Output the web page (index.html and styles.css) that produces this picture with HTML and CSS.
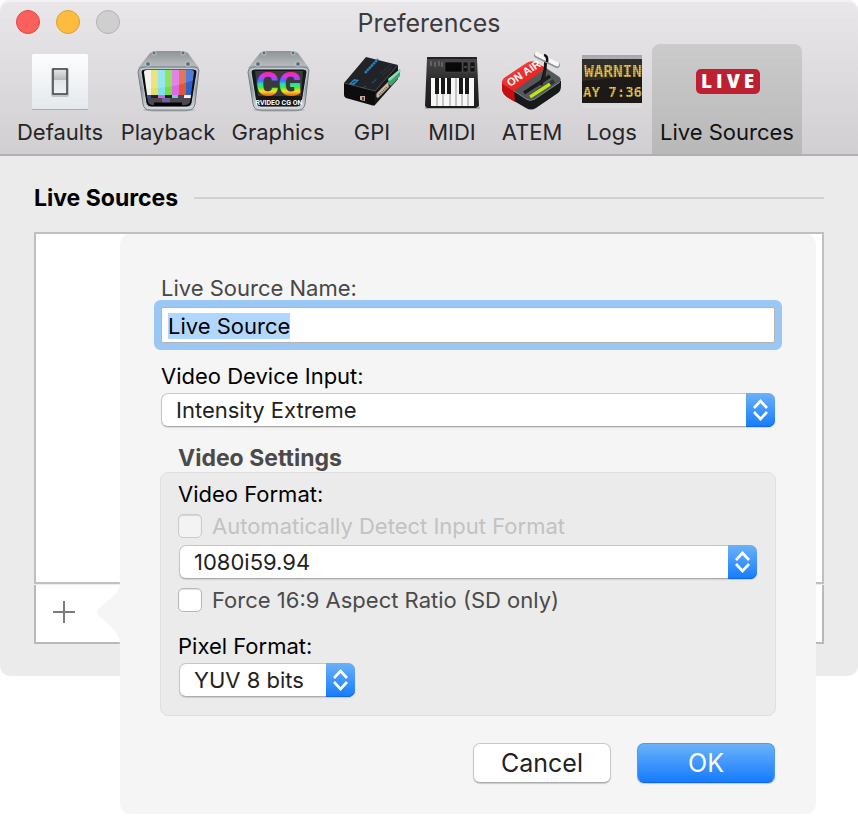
FILE: index.html
```html
<!DOCTYPE html>
<html lang="en">
<head>
    <meta charset="UTF-8">
    <meta name="viewport" content="width=device-width, initial-scale=1.0">
    <title>Preferences</title>
    <link rel="stylesheet" href="styles.css">
</head>
<body>
<div class="window">
    <header class="top">
        <div class="titlebar">
            <div class="lights">
                <button class="light close" aria-label="Close"></button>
                <button class="light minimize" aria-label="Minimize"></button>
                <button class="light zoom" aria-label="Zoom" disabled></button>
            </div>
            <h1>Preferences</h1>
        </div>

        <nav class="toolbar">
            <button class="tool">
                <svg viewBox="0 0 64 64">
                    <defs>
                        <linearGradient id="plate" x1="0" y1="0" x2="0" y2="1"><stop offset="0" stop-color="#fdfeff"/><stop offset="1" stop-color="#e4e9ed"/></linearGradient>
                        <linearGradient id="rocker" x1="0" y1="0" x2="0" y2="1"><stop offset="0" stop-color="#e8e8ea"/><stop offset=".42" stop-color="#b9babc"/><stop offset=".46" stop-color="#e2e6e8"/><stop offset="1" stop-color="#eff3f5"/></linearGradient>
                    </defs>
                    <rect x="4" y="6" width="56" height="56" rx="1" fill="#a9adb1"/>
                    <rect x="4" y="6" width="56" height="55" rx="1" fill="url(#plate)"/>
                    <rect x="23" y="20" width="18" height="29" rx="2" fill="#c3c7ca"/>
                    <rect x="25" y="21" width="14" height="25" fill="url(#rocker)" stroke="#47494c" stroke-width="1.6"/>
                </svg>
                <span>Defaults</span>
            </button>

            <button class="tool">
                <svg viewBox="0 0 64 64">
                    <defs>
                        <linearGradient id="steel" x1="0" y1="0" x2="0" y2="1"><stop offset="0" stop-color="#909396"/><stop offset=".6" stop-color="#b4b8bb"/><stop offset="1" stop-color="#92989d"/></linearGradient>
                        <linearGradient id="bezel" x1="0" y1="0" x2="0" y2="1"><stop offset="0" stop-color="#b5bfc6"/><stop offset=".5" stop-color="#8d9aa3"/><stop offset="1" stop-color="#d4dade"/></linearGradient>
                        <clipPath id="tube"><path d="M8 24 Q8 22 11 22 H55 Q58 22 58 24 L54 54 Q53 57 49 57 H17 Q13 57 12 54 Z"/></clipPath>
                    </defs>
                    <ellipse cx="33" cy="62" rx="26" ry="1.6" fill="#aaa"/>
                    <path d="M18 3 H48 L52 5 L63 20 L33 26 L2 20 L14 5 Z" fill="url(#steel)"/>
                    <path d="M3 21 Q4 19 8 19 H58 Q62 19 63 22 L59 56 Q58 62 52 62 H14 Q8 62 7 56 L2 24 Z" fill="url(#bezel)" stroke="#747e85"/>
                    <path d="M5 24 Q5 21 9 21 H57 Q61 21 61 24 L56 55 Q55 59 51 59 H15 Q11 59 10 55 Z" fill="#08090a" stroke="#dfe5e9" stroke-width=".8"/>
                    <g clip-path="url(#tube)">
                        <path d="M8 22 H16 V50 H8 Z" fill="#f0f0eb"/><path d="M15 22 H22 V50 H15 Z" fill="#e8dc63"/>
                        <path d="M22 22 H30 V50 H22 Z" fill="#7ee2ea"/><path d="M29 22 H37 V50 H29 Z" fill="#76dc42"/>
                        <path d="M36 22 H43 V50 H36 Z" fill="#dc68e3"/><path d="M43 22 H51 V50 H43 Z" fill="#df5733"/>
                        <path d="M50 22 H59 V50 H50 Z" fill="#2c61cf"/>
                        <path d="M10 47 H56 V58 H10 Z" fill="#4b4851"/>
                        <path d="M10 47 H15 V50 H10 Z" fill="#2c50a8"/><path d="M15 47 H22 V50 H15 Z" fill="#202126"/><path d="M22 47 H29 V50 H22 Z" fill="#cb6bd3"/><path d="M29 47 H36 V50 H29 Z" fill="#202126"/><path d="M36 47 H42 V50 H36 Z" fill="#79c4cd"/><path d="M48 47 H56 V50 H48 Z" fill="#f4f4f4"/>
                        <path d="M26 50 H34 V56 H26 Z" fill="#6d629b"/>
                        <path d="M8 22 H58 V32 Q32 42 8 40 Z" fill="#fff" opacity=".18"/>
                    </g>
                    <path d="M18 56 H46" stroke="#020303" stroke-width="3"/>
                    <g fill="#5b707c" stroke="#d9dfe2" stroke-width=".7"><circle cx="18" cy="5" r="2"/><circle cx="47" cy="5" r="2"/><circle cx="12" cy="16" r="2.4"/><circle cx="52" cy="16" r="2.4"/></g>
                </svg>
                <span>Playback</span>
            </button>

            <button class="tool">
                <svg viewBox="0 0 64 64">
                    <defs>
                        <linearGradient id="rainbow" x1="0" y1="23" x2="0" y2="49" gradientUnits="userSpaceOnUse"><stop offset="0" stop-color="#f2306e"/><stop offset=".2" stop-color="#e52bf1"/><stop offset=".38" stop-color="#3a7cf5"/><stop offset=".5" stop-color="#20dec2"/><stop offset=".64" stop-color="#5ae82d"/><stop offset=".78" stop-color="#f4e21a"/><stop offset="1" stop-color="#f2371e"/></linearGradient>
                    </defs>
                    <ellipse cx="33" cy="62" rx="26" ry="1.6" fill="#aaa"/>
                    <path d="M18 3 H48 L52 5 L63 20 L33 26 L2 20 L14 5 Z" fill="url(#steel)"/>
                    <path d="M3 21 Q4 19 8 19 H58 Q62 19 63 22 L59 56 Q58 62 52 62 H14 Q8 62 7 56 L2 24 Z" fill="url(#bezel)" stroke="#747e85"/>
                    <path d="M5 24 Q5 21 9 21 H57 Q61 21 61 24 L56 55 Q55 59 51 59 H15 Q11 59 10 55 Z" fill="#161718" stroke="#dfe5e9" stroke-width=".8"/>
                    <path d="M9 23 H57 L55 48 H12 Z" fill="#393a3c"/>
                    <text class="cg-big" x="33" y="48" fill="url(#rainbow)">CG</text>
                    <text class="cg-small" x="33" y="57">RVIDEO CG ON</text>
                    <g fill="#5b707c" stroke="#d9dfe2" stroke-width=".7"><circle cx="18" cy="5" r="2"/><circle cx="47" cy="5" r="2"/><circle cx="12" cy="16" r="2.4"/><circle cx="52" cy="16" r="2.4"/></g>
                </svg>
                <span>Graphics</span>
            </button>

            <button class="tool">
                <svg viewBox="0 0 64 64">
                    <path d="M26 9 L58 17 L35 43 L4 35 Z" fill="#222326"/>
                    <path d="M4 35 L35 43 V57 Q34 58 31 57 L6 50 Q4 49 4 47 Z" fill="#0d0d0e"/>
                    <path d="M35 43 L58 17 V31 L35 57 Z" fill="#171719"/>
                    <path d="M4 35 L35 43 L58 17" fill="none" stroke="#48494c" stroke-width=".7"/>
                    <path d="M48 31 L60 21 V28 L51 38 L48 36 Z" fill="#3da270"/>
                    <path d="M48 31 L60 21 L61 23 L50 33 Z" fill="#8fdab0"/>
                    <path d="M37 45 L48 34 L49 39 L38 50 Q35 49 37 45 Z" fill="#c8bda1" stroke="#756c59" stroke-width=".7"/>
                    <path d="M39 47 L47 39" stroke="#605743" stroke-width="1.5" stroke-dasharray="1 1"/>
                    <path d="M20 48 H25 V53 L20 52 Z" fill="#c9ae97"/><path d="M22 49 H24 V52 H22 Z" fill="#5b4639"/>
                    <path d="M9 36 L14 37 L19 32 L14 31 Z" fill="#2585c9"/><path d="M12 35 L16 33" stroke="#102c45"/>
                    <path d="M25 25 L38 11" stroke="#2585c9" stroke-width="2.4" stroke-dasharray="2.5 .5"/>
                    <path d="M23 40 L26 38 M32 35 L37 31" stroke="#2167a1" stroke-width="1.5" stroke-dasharray="1 1"/>
                    <path d="M41 25 L51 16 M43 27 L51 20" stroke="#3d4b63" stroke-dasharray="1 1"/>
                </svg>
                <span>GPI</span>
            </button>

            <button class="tool">
                <svg viewBox="0 0 64 64">
                    <defs><linearGradient id="synth" x1="0" y1="0" x2="0" y2="1"><stop offset="0" stop-color="#4a4a4b"/><stop offset=".5" stop-color="#29292a"/><stop offset="1" stop-color="#1c1c1d"/></linearGradient></defs>
                    <path d="M5 60 H60" stroke="#aaa" stroke-width="2"/>
                    <path d="M7 10 Q7 9 8 9 H56 Q57 9 57 10 L59 58 L56 60 H7 L5 58 Z" fill="url(#synth)"/>
                    <path d="M7 10 H57" stroke="#161616" stroke-width="1.5"/>
                    <rect x="25" y="14" width="17" height="10" rx="1" fill="#080808" stroke="#555" stroke-width=".5"/>
                    <rect x="43" y="14" width="5" height="10" fill="#111" stroke="#666" stroke-width=".5"/><rect x="50" y="14" width="5" height="10" fill="#111" stroke="#666" stroke-width=".5"/>
                    <path d="M11 13 V18 M15 14 V19 M19 13 V18 M22 14 V19 M44 19 H47 M51 19 H54" stroke="#777" stroke-width="1.2"/>
                    <rect x="11" y="30" width="43" height="28" fill="#f7f7f7"/>
                    <path d="M17 30 V58 M23 30 V58 M30 30 V58 M36 30 V58 M42 30 V58 M48 30 V58" stroke="#777" stroke-width=".8"/>
                    <path d="M15 30 H19 V46 H15 Z M21 30 H25 V46 H21 Z M27 30 H31 V46 H27 Z M39 30 H43 V46 H39 Z M45 30 H49 V46 H45 Z" fill="#171719"/>
                </svg>
                <span>MIDI</span>
            </button>

            <button class="tool">
                <svg viewBox="0 0 64 64">
                    <defs><linearGradient id="air" x1="0" y1="0" x2="1" y2="1"><stop offset="0" stop-color="#ff4a42"/><stop offset="1" stop-color="#d90e12"/></linearGradient></defs>
                    <path d="M2 33 V42 Q3 46 7 49 L26 60 Q31 63 36 60 L58 45 Q61 43 61 38 V33 Z" fill="#17191b"/>
                    <path d="M2 34 V42 Q3 46 7 49 L15 54 L14 42 Z" fill="#c80d11"/>
                    <path d="M4 30 L25 16 Q30 12 35 14 L46 20 L15 44 L4 37 Q0 34 4 30 Z" fill="url(#air)"/>
                    <path d="M46 20 L58 28 Q63 31 59 35 L35 51 Q30 54 26 51 L14 43 Z" fill="#55585b"/>
                    <path d="M14 43 L26 51 Q30 54 35 51 L60 34" fill="none" stroke="#909396" stroke-width=".8"/>
                    <path d="M24 45 L50 28" stroke="#191a1b" stroke-width="3.4"/>
                    <path d="M30 49 L54 33" stroke="#303330" stroke-width="4"/>
                    <path d="M30 49 L50 36" stroke="#bce519" stroke-width="3.4"/>
                    <path d="M41 37 L45 22 L46 9" fill="none" stroke="#111214" stroke-width="3"/>
                    <path d="M36 38 L44 32 L45 22" fill="none" stroke="#1d1f21" stroke-width="2.4"/>
                    <path d="M37 7 L57 17" stroke="#929292" stroke-width="6" stroke-linecap="round"/>
                    <path d="M37 6 L57 16" stroke="#f7f7f7" stroke-width="4.6" stroke-linecap="round"/>
                    <path d="M44 7 Q48 8 47 14" fill="none" stroke="#111" stroke-width="2.5"/>
                    <text class="on-air" transform="translate(10 39) rotate(-34)">ON AIR</text>
                </svg>
                <span>ATEM</span>
            </button>

            <button class="tool">
                <svg viewBox="0 0 64 64">
                    <defs>
                        <linearGradient id="rail" x1="0" y1="0" x2="0" y2="1"><stop offset="0" stop-color="#a8a8aa"/><stop offset="1" stop-color="#dedee0"/></linearGradient>
                        <pattern id="dots" width="2" height="2" patternUnits="userSpaceOnUse"><path d="M0 0 H2 M0 0 V2" stroke="#17140e" stroke-width=".4"/></pattern>
                    </defs>
                    <rect x="2" y="7" width="60" height="53" fill="url(#rail)"/>
                    <rect x="2" y="11" width="60" height="44" fill="#1c1b19"/>
                    <path d="M2 33 Q35 31 62 24 V11 H2 Z" fill="#343331"/>
                    <text class="led" x="4" y="29">WARNIN</text>
                    <text class="led time" x="3" y="49">AY 7:36</text>
                    <rect x="2" y="11" width="60" height="44" fill="url(#dots)"/>
                </svg>
                <span>Logs</span>
            </button>

            <button class="tool selected">
                <svg viewBox="0 0 64 64">
                    <rect x="1" y="21" width="64" height="25" rx="5" fill="#bd2031"/>
                    <text class="live" x="6" y="40">LIVE</text>
                </svg>
                <span>Live Sources</span>
            </button>
        </nav>
    </header>

    <main class="pane">
        <div class="heading">
            <h2>Live Sources</h2>
            <hr>
        </div>
        <div class="source-list"></div>
        <div class="list-footer">
            <button class="add" aria-label="Add live source">
                <svg viewBox="0 0 22 22"><path d="M11 0 V22 M0 11 H22" stroke="#7b7b7b" stroke-width="2"/></svg>
            </button>
        </div>

        <form class="popover">
            <svg class="arrow" viewBox="0 0 24 66"><path d="M24 0 C24 10 20 14 14 19 L2 29 Q-1 32 2 35 L14 46 C20 51 24 56 24 66 Z" fill="#f5f5f5"/></svg>

            <label class="muted" for="name">Live Source Name:</label>
            <input class="name" type="text" id="name" value="Live Source" autocomplete="off" spellcheck="false">

            <label class="device-label" for="device">Video Device Input:</label>
            <div class="popup">
                <select id="device"><option>Intensity Extreme</option></select>
                <svg viewBox="0 0 29 34"><path d="M8 15 L14.5 8 L21 15 M8 19 L14.5 26 L21 19"/></svg>
            </div>

            <fieldset>
                <legend>Video Settings</legend>
                <div class="box">
                    <label for="format">Video Format:</label>
                    <div class="check off">
                        <input type="checkbox" id="auto" disabled>
                        <label for="auto">Automatically Detect Input Format</label>
                    </div>
                    <div class="popup">
                        <select id="format"><option>1080i59.94</option></select>
                        <svg viewBox="0 0 29 34"><path d="M8 15 L14.5 8 L21 15 M8 19 L14.5 26 L21 19"/></svg>
                    </div>
                    <div class="check">
                        <input type="checkbox" id="force">
                        <label for="force">Force 16:9 Aspect Ratio (SD only)</label>
                    </div>
                    <label class="pixel-label" for="pixel">Pixel Format:</label>
                    <div class="popup small">
                        <select id="pixel"><option>YUV 8 bits</option></select>
                        <svg viewBox="0 0 29 34"><path d="M8 15 L14.5 8 L21 15 M8 19 L14.5 26 L21 19"/></svg>
                    </div>
                </div>
            </fieldset>

            <div class="actions">
                <button class="btn" type="button">Cancel</button>
                <button class="btn ok" type="submit">OK</button>
            </div>
        </form>
    </main>
</div>
<script>
    const nameField = document.getElementById('name');
    nameField.focus();
    nameField.select();
</script>
</body>
</html>
```
FILE: styles.css
```css
* {
    box-sizing: border-box;
}

body {
    min-height: 100vh;
    margin: 0;
    padding-bottom: 164px; /* the popover hangs below the window */
    background: #fff;
    color: #000;
    font-family: Inter, "Liberation Sans", sans-serif;
    font-size: 22px;
    line-height: 28px;
}

button, input, select {
    font: inherit;
    color: inherit;
    margin: 0;
}

.window {
    background: #ebebeb;
    border-radius: 10px;
}

.top {
    border-radius: 10px 10px 0 0;
    background: linear-gradient(#e9e7e9, #d1cfd1);
    border-bottom: 2px solid #b1afb1;
    box-shadow: inset 0 2px 0 #f4f2f4;
}

.titlebar {
    position: relative;
    height: 44px;
}

.titlebar h1 {
    margin: 0;
    font-size: 25px;
    font-weight: 400;
    line-height: 46px;
    text-align: center;
    color: #3d3b3d;
}

.lights {
    position: absolute;
    left: 16px;
    top: 10px;
    display: flex;
    gap: 16px;
}

.light {
    width: 24px;
    height: 24px;
    padding: 0;
    border: 1px solid #e2463f;
    border-radius: 50%;
    background: #fc605c;
}

.minimize {
    background: #fdbc40;
    border-color: #e0a032;
}

.light.zoom {
    background: #cfcfcf;
    border-color: #b3b3b3;
}

/* toolbar */
.toolbar {
    display: grid;
    grid-template-columns: 102px 110px 106px 78px 78px 78px 77px 150px;
    gap: 2px;
    padding-left: 9px;
}

.tool {
    display: flex;
    flex-direction: column;
    align-items: center;
    gap: 6px;
    height: 110px;
    padding: 4px 0 0;
    border: 0;
    border-radius: 8px 8px 0 0;
    background: none;
    color: #272527;
    white-space: nowrap;
}

.tool svg {
    width: 64px;
    height: 64px;
    overflow: visible;
}

.tool.selected {
    background: linear-gradient(#cccbcc, #b9b8b9);
    color: #111;
}

.cg-big {
    font: 900 34px Roboto, sans-serif;
    text-anchor: middle;
}

.cg-small {
    font: bold 7px Roboto, sans-serif;
    text-anchor: middle;
    fill: #fff;
}

.on-air {
    font: bold 11px "Liberation Sans", sans-serif;
    fill: #fff;
}

.led {
    font: bold 16px "DejaVu Sans Mono", monospace;
    fill: #f7cd50;
}

.led.time {
    font-size: 14px;
}

.live {
    font: 800 19px "Open Sans", sans-serif;
    letter-spacing: 4px;
    fill: #fff;
}

/* list behind the popover */
.pane {
    position: relative;
    padding: 28px 34px 32px;
}

.heading {
    display: flex;
    align-items: center;
    gap: 16px;
}

.heading h2 {
    margin: 0;
    font-size: 23px;
    font-weight: 700;
}

.heading hr {
    flex: 1;
    margin: 0;
    border: 0;
    border-top: 2px solid #d1d1d1;
}

.source-list {
    height: 352px;
    margin-top: 20px;
    background: #fff;
    border: 2px solid #c0c0c0;
}

.list-footer {
    height: 59px;
    margin-top: 1px;
    background: #fff;
    border: 2px solid #b9b9b9;
    border-top: 0;
}

.add {
    display: block;
    width: 56px;
    height: 54px;
    padding: 0;
    border: 0;
    background: none;
}

.add svg {
    display: block;
    width: 22px;
    height: 22px;
    margin: auto;
}

/* popover */
.popover {
    position: absolute;
    top: 78px;
    left: 120px;
    right: 42px;
    padding: 40px 41px 31px;
    border-radius: 10px;
    background: #f5f5f5;
}

.arrow {
    position: absolute;
    left: -24px;
    top: 346px;
    width: 24px;
    height: 66px;
}

.popover label {
    display: block;
}

.popover .muted {
    color: #474747;
}

.name {
    display: block;
    width: 100%;
    height: 36px;
    margin-top: 5px;
    padding: 2px 6px 0;
    border: 1px solid #b4b4b4;
    background: #fff;
    outline: none;
    border-radius: 0;
}

.name:focus {
    box-shadow: 0 0 0 7px #9bc7f4;
    border-radius: 2px;
}

.name::selection {
    background: #b2d7fe;
    color: #000;
}

.popover .device-label {
    margin-top: 19px;
}

.popup {
    position: relative;
    margin-top: 3px;
}

.popup select {
    display: block;
    width: 100%;
    height: 34px;
    padding: 0 40px 0 14px;
    border: 1px solid #c6c6c6;
    border-bottom-color: #acacac;
    border-radius: 7px;
    background: #fff;
    box-shadow: 0 1px 1px rgba(0, 0, 0, 0.12);
    color: #222;
    appearance: none;
}

.popup svg {
    position: absolute;
    top: 0;
    right: 0;
    width: 29px;
    height: 34px;
    border-radius: 0 7px 7px 0;
    background: linear-gradient(#6bb1f9, #157cfc);
    box-shadow: inset 0 -1px 0 #0f66f0;
    fill: none;
    stroke: #fff;
    stroke-width: 2.6;
    pointer-events: none;
}

fieldset {
    min-width: 0;
    margin: 17px -1px 0;
    padding: 0;
    border: 0;
}

legend {
    display: block;
    padding: 0 18px;
    font-size: 23px;
    font-weight: 700;
    color: #4a4a4a;
}

.box {
    padding: 7px 17px 18px;
    border: 1px solid #dfdfdf;
    border-radius: 8px;
    background: #ebebeb;
}

.box .popup {
    margin: 5px 1px 0;
}

.check {
    display: flex;
    align-items: center;
    gap: 10px;
    margin-top: 4px;
    color: #4a4a4a;
}

.popup + .check {
    margin-top: 7px;
}

.check input {
    width: 24px;
    height: 24px;
    border: 1px solid #b8b8b8;
    border-radius: 5px;
    background: #fff;
    box-shadow: inset 0 1px 1px rgba(0, 0, 0, 0.12);
    appearance: none;
}

.check.off {
    color: #c2c2c2;
}

.check.off input {
    border-color: #cbcbcb;
    background: #f3f3f3;
}

.box .pixel-label {
    margin-top: 18px;
}

.box .small {
    width: 176px;
    margin-top: 3px;
}

.actions {
    display: flex;
    justify-content: flex-end;
    gap: 26px;
    margin-top: 27px;
}

.btn {
    width: 138px;
    height: 40px;
    padding: 0;
    border: 1px solid #c9c9c9;
    border-bottom-color: #adadad;
    border-radius: 7px;
    background: #fff;
    box-shadow: 0 1px 1px rgba(0, 0, 0, 0.18);
    color: #222;
    font-size: 25px;
}

.btn.ok {
    border-color: #4b9bf5;
    border-bottom-color: #0f66f0;
    background: linear-gradient(#6bb1f9, #157cfc);
    color: #fff;
}
```
